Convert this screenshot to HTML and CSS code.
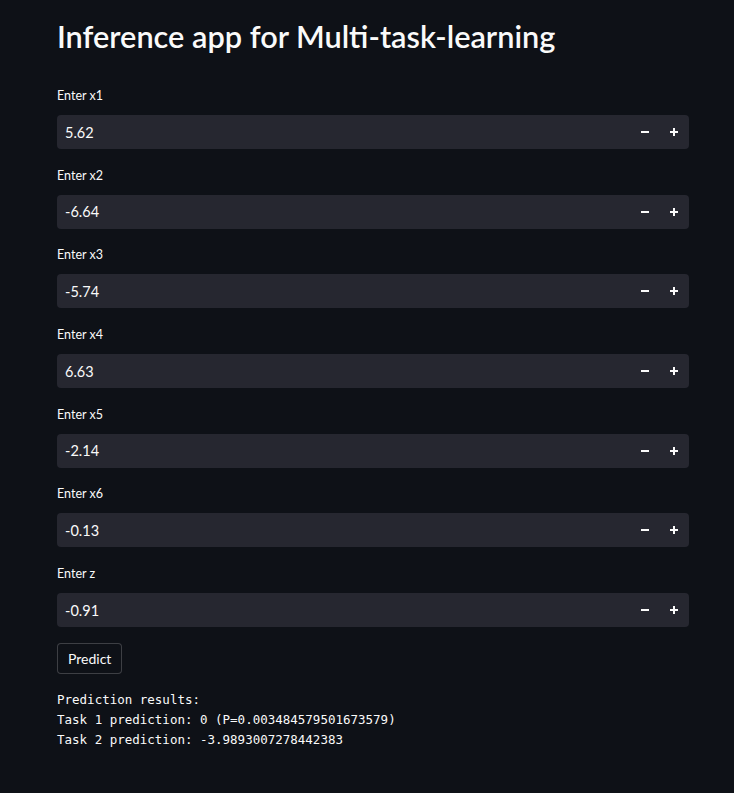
FILE: index.html
```html
<!DOCTYPE html>
<html>
<head>
<meta charset="utf-8">
<link rel="stylesheet" href="styles.css">
</head>
<body>
<main class="main">
  <h1 class="title">Inference app for Multi-task-learning</h1>
  <div class="fields">
    <div class="field"><label class="label">Enter x1</label><div class="num"><span class="val">5.62</span><span class="step"><svg width="8" height="8" viewBox="0 0 8 8"><rect x="0" y="3" width="8" height="2" fill="#fafafa"/></svg></span><span class="step"><svg width="8" height="8" viewBox="0 0 8 8"><rect x="0" y="3" width="8" height="2" fill="#fafafa"/><rect x="3" y="0" width="2" height="8" fill="#fafafa"/></svg></span></div></div>
    <div class="field"><label class="label">Enter x2</label><div class="num"><span class="val">-6.64</span><span class="step"><svg width="8" height="8" viewBox="0 0 8 8"><rect x="0" y="3" width="8" height="2" fill="#fafafa"/></svg></span><span class="step"><svg width="8" height="8" viewBox="0 0 8 8"><rect x="0" y="3" width="8" height="2" fill="#fafafa"/><rect x="3" y="0" width="2" height="8" fill="#fafafa"/></svg></span></div></div>
    <div class="field"><label class="label">Enter x3</label><div class="num"><span class="val">-5.74</span><span class="step"><svg width="8" height="8" viewBox="0 0 8 8"><rect x="0" y="3" width="8" height="2" fill="#fafafa"/></svg></span><span class="step"><svg width="8" height="8" viewBox="0 0 8 8"><rect x="0" y="3" width="8" height="2" fill="#fafafa"/><rect x="3" y="0" width="2" height="8" fill="#fafafa"/></svg></span></div></div>
    <div class="field"><label class="label">Enter x4</label><div class="num"><span class="val">6.63</span><span class="step"><svg width="8" height="8" viewBox="0 0 8 8"><rect x="0" y="3" width="8" height="2" fill="#fafafa"/></svg></span><span class="step"><svg width="8" height="8" viewBox="0 0 8 8"><rect x="0" y="3" width="8" height="2" fill="#fafafa"/><rect x="3" y="0" width="2" height="8" fill="#fafafa"/></svg></span></div></div>
    <div class="field"><label class="label">Enter x5</label><div class="num"><span class="val">-2.14</span><span class="step"><svg width="8" height="8" viewBox="0 0 8 8"><rect x="0" y="3" width="8" height="2" fill="#fafafa"/></svg></span><span class="step"><svg width="8" height="8" viewBox="0 0 8 8"><rect x="0" y="3" width="8" height="2" fill="#fafafa"/><rect x="3" y="0" width="2" height="8" fill="#fafafa"/></svg></span></div></div>
    <div class="field"><label class="label">Enter x6</label><div class="num"><span class="val">-0.13</span><span class="step"><svg width="8" height="8" viewBox="0 0 8 8"><rect x="0" y="3" width="8" height="2" fill="#fafafa"/></svg></span><span class="step"><svg width="8" height="8" viewBox="0 0 8 8"><rect x="0" y="3" width="8" height="2" fill="#fafafa"/><rect x="3" y="0" width="2" height="8" fill="#fafafa"/></svg></span></div></div>
    <div class="field"><label class="label">Enter z</label><div class="num"><span class="val">-0.91</span><span class="step"><svg width="8" height="8" viewBox="0 0 8 8"><rect x="0" y="3" width="8" height="2" fill="#fafafa"/></svg></span><span class="step"><svg width="8" height="8" viewBox="0 0 8 8"><rect x="0" y="3" width="8" height="2" fill="#fafafa"/><rect x="3" y="0" width="2" height="8" fill="#fafafa"/></svg></span></div></div>
  </div>
  <button class="btn">Predict</button>
  <pre class="out">Prediction results:
Task 1 prediction: 0 (P=0.003484579501673579)
Task 2 prediction: -3.9893007278442383</pre>
</main>
</body>
</html>
```
FILE: styles.css
```css
html, body {
  margin: 0;
  padding: 0;
  background: #0e1117;
  color: #fafafa;
  font-family: Lato, "Noto Sans", sans-serif;
}
.main {
  width: 632px;
  margin-left: 57px;
  padding-top: 17px;
}
.title {
  margin: 0;
  font-size: 30.7px;
  font-weight: 600;
  line-height: 40px;
}
.fields {
  margin-top: 25px;
  display: flex;
  flex-direction: column;
  gap: 12.7px;
}
.field {
  display: flex;
  flex-direction: column;
}
.label {
  font-size: 12.5px;
  line-height: 28px;
  height: 28px;
  margin-bottom: 5px;
  color: #fafafa;
}
.num {
  height: 34px;
  background: #262730;
  border-radius: 4px;
  display: flex;
  align-items: center;
}
.val {
  flex: 1;
  padding-left: 8px;
  font-size: 14.5px;
}
.step {
  width: 29px;
  height: 34px;
  display: flex;
  align-items: center;
  justify-content: center;
}
.step:last-child { margin-right: 1px; }
.btn {
  margin-top: 16px;
  height: 31px;
  padding: 0 10px;
  background: #0e1117;
  color: #fafafa;
  border: 1px solid rgba(250,250,250,0.2);
  border-radius: 4px;
  font-family: Lato, "Noto Sans", sans-serif;
  font-size: 14px;
  display: block;
}
.out {
  margin: 16px 0 0 0;
  font-family: "DejaVu Sans Mono", monospace;
  font-size: 12.5px;
  line-height: 20px;
  color: #fafafa;
}
```
